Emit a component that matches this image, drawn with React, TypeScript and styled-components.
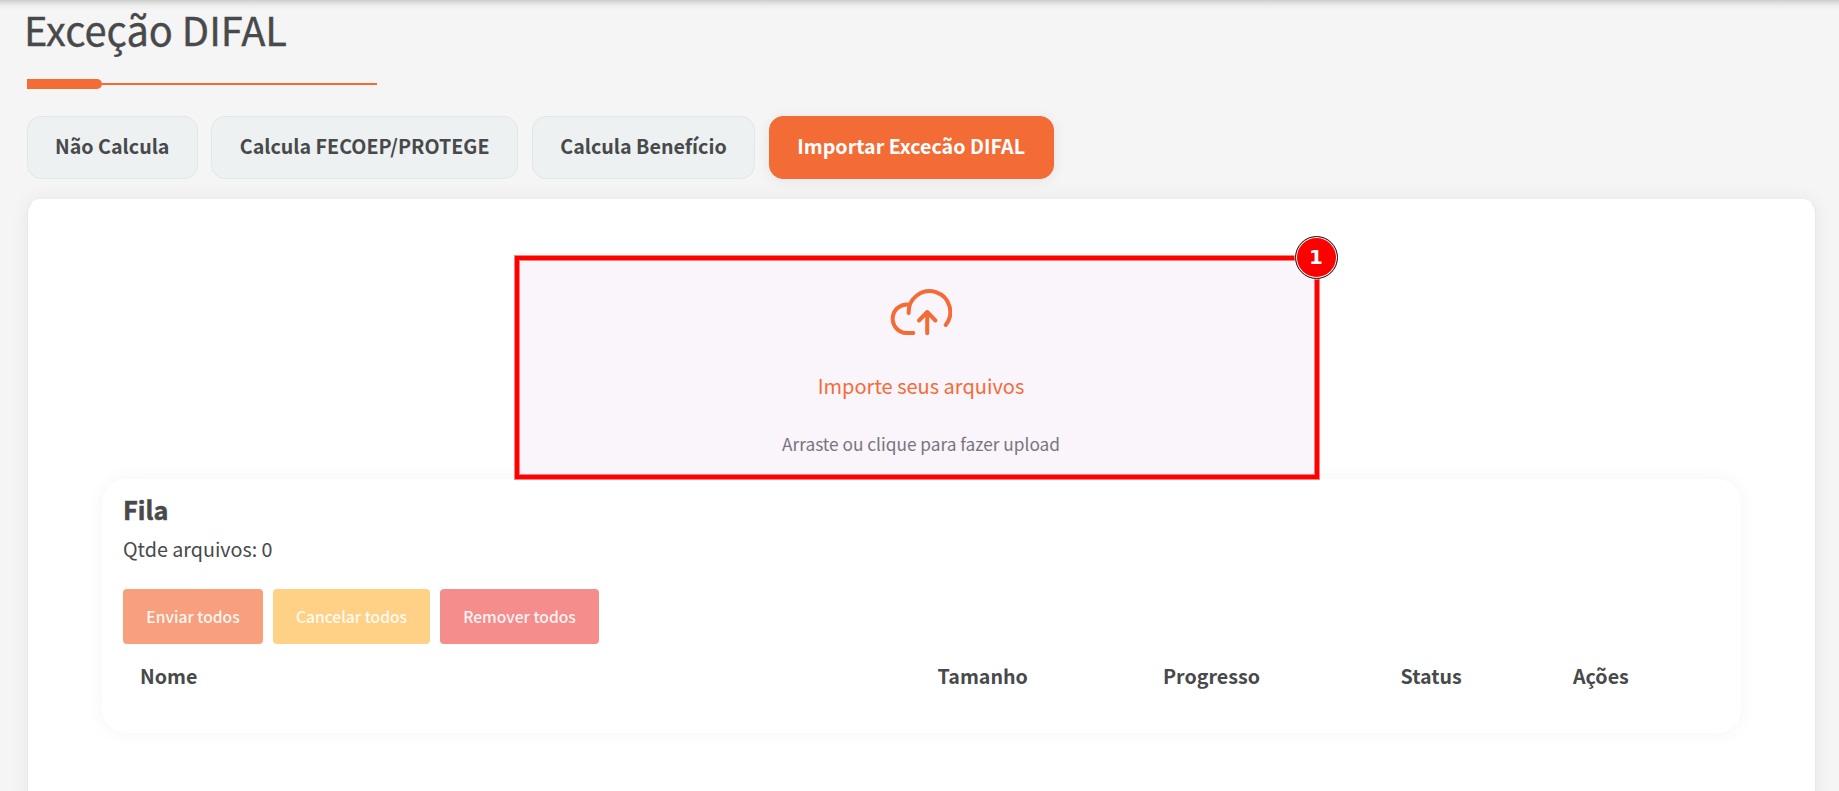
import React from "react";
import styled, { createGlobalStyle } from "styled-components";

const Global = createGlobalStyle`
  * { box-sizing: border-box; }
  body {
    margin: 0;
    height: 791px;
    overflow: hidden;
    background: #f5f5f5;
    color: #48494b;
    font-family: "Noto Sans CJK SC", "Noto Sans", sans-serif;
  }
`;

const Page = styled.div`
  height: 791px;
  overflow: hidden;
  padding: 0 23px 0 27px;
  background: linear-gradient(#cdcdcd, #e0e0e0 3px, #eeeeee 6px, #f5f5f5 10px) top / 100% 10px no-repeat;
`;

const Title = styled.h1`
  margin: 0 0 0 -3px;
  padding-top: 4px;
  height: 79px;
  font-size: 39.8px;
  font-weight: 400;
  line-height: 50px;
  -webkit-text-stroke: 0.35px #48494b;
`;

const Rule = styled.div`
  display: flex;
  align-items: center;
  width: 350px;
  height: 10px;
`;
const RuleCap = styled.div`
  width: 75px;
  height: 10px;
  border-radius: 0 5px 5px 0;
  background: #f36c36;
`;
const RuleLine = styled.div`
  flex: 1;
  height: 2px;
  background: #f36c36;
`;

const Tabs = styled.nav`
  display: flex;
  gap: 13.5px;
  margin-top: 27px;
`;
const Tab = styled.button<{ $w: number; $active?: boolean }>`
  width: ${(p) => p.$w}px;
  height: 63px;
  padding: 0 0 3px;
  border: 1px solid ${(p) => (p.$active ? "#f36c36" : "#dfe7e9")};
  border-radius: 14px;
  background: ${(p) => (p.$active ? "#f36c36" : "#edf1f2")};
  color: ${(p) => (p.$active ? "#fff" : "#48494b")};
  box-shadow: ${(p) => (p.$active ? "0 2px 14px rgba(0,0,0,.07)" : "none")};
  font: 700 19.65px/30px "Noto Sans CJK SC", sans-serif;
  white-space: nowrap;
`;

const Panel = styled.main`
  margin-top: 20px;
  height: 640px;
  padding: 56px 74px 0;
  border: 1px solid #e3eaec;
  border-top-color: #fff;
  border-radius: 14px;
  background: #fff;
  box-shadow: 0 0 20px rgba(0, 0, 0, 0.06);
`;

const Highlight = styled.div`
  position: relative;
  z-index: 1;
  width: 804px;
  height: 223px;
  margin-left: 413px;
  border: 4px solid #f00;
  box-shadow: 0 0 0 1px rgba(255, 0, 0, 0.5);
  background: #fff;
  &::after {
    content: "";
    position: absolute;
    inset: 0;
    box-shadow: inset 0 0 0 1px rgba(255, 0, 0, 0.5);
  }
`;
const DropZone = styled.section`
  display: flex;
  flex-direction: column;
  align-items: center;
  height: 100%;
  padding-top: 26.5px;
  border-radius: 10px 10px 0 0;
  background: #faf4fb;
`;
const CloudIcon = styled.svg`
  display: block;
  flex: none;
  width: 64px;
  height: 50px;
  margin-left: 5px;
`;
const DropTitle = styled.p`
  margin: 34.5px 0 0 8px;
  color: #f36c36;
  font-size: 20px;
  line-height: 30px;
`;
const DropHint = styled.p`
  margin: 29px 0 0 8px;
  color: #77747f;
  font-size: 17.25px;
  line-height: 28px;
`;
const Badge = styled.span`
  position: absolute;
  z-index: 1;
  top: -24.5px;
  right: -22.5px;
  display: flex;
  align-items: center;
  justify-content: center;
  width: 43px;
  height: 43px;
  border: 1.5px solid #222;
  border-radius: 50%;
  background: #f00;
  box-shadow: inset 0 0 0 1px #fff, 0 0 0 0.5px #fff;
  color: #fff;
  font: 700 20px/1 "DejaVu Sans", sans-serif;
`;

const Queue = styled.section`
  height: 254px;
  padding: 14px 21px 0;
  border-radius: 24px;
  background: #fff;
  box-shadow: 0 0 20px rgba(0, 0, 0, 0.045);
`;
const QueueTitle = styled.h2`
  margin: -1px 0 0;
  font-size: 25.3px;
  font-weight: 700;
  line-height: 34px;
  -webkit-text-stroke: 0.5px #48494b;
`;
const Count = styled.p`
  margin: 8px 0 0;
  font-size: 19.7px;
  line-height: 30px;
`;
const Actions = styled.div`
  display: flex;
  gap: 10px;
  margin-top: 25px;
`;
const Action = styled.button<{ $w: number; $bg: string }>`
  width: ${(p) => p.$w}px;
  height: 55px;
  padding: 0 0 2px;
  border: 0;
  border-radius: 4px;
  background: ${(p) => p.$bg};
  color: rgba(255, 255, 255, 0.92);
  font: 500 15.6px/24px "Noto Sans CJK SC", sans-serif;
`;
const Header = styled.div`
  display: grid;
  grid-template-columns: 797.5px 225.5px 237.5px 172.5px 1fr;
  margin-top: 17px;
  padding-left: 17px;
  font-size: 19.65px;
  font-weight: 700;
  line-height: 30px;
`;

export default function App() {
  return (
    <>
      <Global />
      <Page>
        <Title>Exceção DIFAL</Title>
        <Rule><RuleCap /><RuleLine /></Rule>
        <Tabs>
          <Tab $w={170.5}>Não Calcula</Tab>
          <Tab $w={307.3}>Calcula FECOEP/PROTEGE</Tab>
          <Tab $w={223.4}>Calcula Benefício</Tab>
          <Tab $w={285} $active>Importar Excecão DIFAL</Tab>
        </Tabs>
        <Panel>
          <Highlight>
            <DropZone>
              <CloudIcon viewBox="0 0 64 50" fill="none" stroke="#f36c36" strokeWidth="4" strokeLinecap="round" strokeLinejoin="round">
                <path d="M25.3 46H18.4A14.3 14.3 0 1 1 21.3 17.6" />
                <path d="M20.7 26A20.8 20.8 0 1 1 57.7 38" />
                <path d="M39.2 46.3V25M31 33.5L39.2 25L47.4 33.5" />
              </CloudIcon>
              <DropTitle>Importe seus arquivos</DropTitle>
              <DropHint>Arraste ou clique para fazer upload</DropHint>
            </DropZone>
            <Badge>1</Badge>
          </Highlight>
          <Queue>
            <QueueTitle>Fila</QueueTitle>
            <Count>Qtde arquivos: 0</Count>
            <Actions>
              <Action $w={140} $bg="#f8a07e">Enviar todos</Action>
              <Action $w={157} $bg="#ffd186">Cancelar todos</Action>
              <Action $w={159} $bg="#f68d8d">Remover todos</Action>
            </Actions>
            <Header>
              <span>Nome</span><span>Tamanho</span><span>Progresso</span><span>Status</span><span>Ações</span>
            </Header>
          </Queue>
        </Panel>
      </Page>
    </>
  );
}
